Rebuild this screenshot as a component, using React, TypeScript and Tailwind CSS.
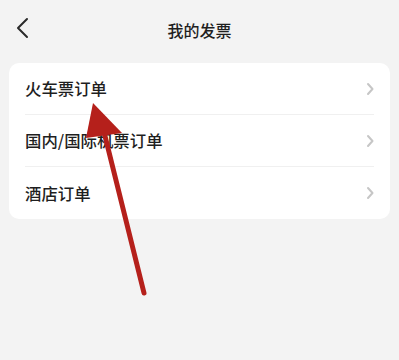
const rows = ["火车票订单", "国内/国际机票订单", "酒店订单"];

function Chevron() {
  return (
    <svg width="10" height="14" viewBox="0 0 10 14" className="mr-[-1px]">
      <polyline points="3,2 7.5,7 3,12" fill="none" stroke="#c6c6c6" strokeWidth="2" strokeLinecap="round" strokeLinejoin="round" />
    </svg>
  );
}

export default function App() {
  return (
    <div
      className="relative h-[360px] w-[399px] overflow-hidden bg-[#f3f3f3] text-[#222]"
      style={{ fontFamily: '"Noto Sans CJK SC", "Noto Sans", sans-serif' }}
    >
      <header className="relative flex h-[60px] items-center justify-center">
        <svg className="absolute left-[12px] top-[14px]" width="24" height="28" viewBox="0 0 24 28">
          <polyline points="15,5 6,14 15,23" fill="none" stroke="#2a2a2a" strokeWidth="2" strokeLinecap="round" strokeLinejoin="round" />
        </svg>
        <h1 className="text-[16px] font-medium text-[#1f1f1f]">我的发票</h1>
      </header>

      <div className="mx-[9px] mt-[3px] rounded-[10px] bg-white px-[16px]">
        {rows.map((label, i) => (
          <div
            key={label}
            className={`flex h-[52px] items-center justify-between ${i < rows.length - 1 ? "border-b border-[#f0f0f0]" : ""}`}
          >
            <span className="text-[16.4px] font-medium leading-none text-[#1f1f1f]">{label}</span>
            <Chevron />
          </div>
        ))}
      </div>

      {/* annotation arrow */}
      <svg className="pointer-events-none absolute inset-0" width="399" height="360" viewBox="0 0 399 360">
        <line x1="144" y1="293" x2="103" y2="128" stroke="#b5201b" strokeWidth="5" strokeLinecap="round" />
        <polygon points="93,103 86,138 122,133" fill="#b5201b" />
      </svg>
    </div>
  );
}
